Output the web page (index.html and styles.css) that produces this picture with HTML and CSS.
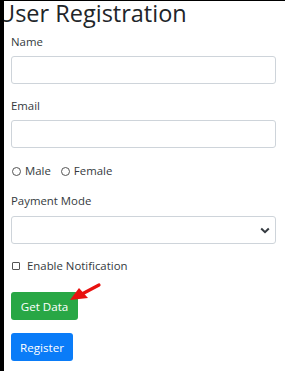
FILE: index.html
```html
<!DOCTYPE html>
<html lang="en">
  <head>
    <meta charset="UTF-8" />
    <meta name="viewport" content="width=device-width, initial-scale=1.0" />
    <title>User Registration</title>
    <link rel="stylesheet" href="styles.css">
  </head>
  <body>
    <div class="page">
      <h1 class="title">User Registration</h1>

      <form class="reg-form">
        <div class="form-group">
          <label class="field-label">Name</label>
          <input type="text" class="field" />
        </div>

        <div class="form-group form-group-wide">
          <label class="field-label">Email</label>
          <input type="text" class="field" />
        </div>

        <div class="radio-row">
          <span class="radio-item"><span class="radio"></span>Male</span>
          <span class="radio-item"><span class="radio"></span>Female</span>
        </div>

        <div class="form-group">
          <label class="field-label field-label-select">Payment Mode</label>
          <div class="select">
            <svg class="chevron" width="10" height="7" viewBox="0 0 10 7">
              <path d="M1.2 1.5 L5 5.2 L8.8 1.5" fill="none" stroke="#343a40" stroke-width="2" />
            </svg>
          </div>
        </div>

        <div class="check-row">
          <span class="checkbox"></span>Enable Notification
        </div>

        <div class="btn-wrap">
          <button type="button" class="btn btn-green">Get Data</button>
          <!-- pointer arrow -->
          <svg class="arrow" width="34" height="22" viewBox="0 0 34 22">
            <path d="M31 3 L14 12" stroke="#e8110f" stroke-width="3.2" stroke-linecap="round" />
            <polygon points="2,18 11,6 20,16" fill="#e8110f" />
          </svg>
        </div>

        <button type="button" class="btn btn-blue">Register</button>
      </form>
    </div>
  </body>
</html>
```

FILE: styles.css
```css
* {
  margin: 0;
  padding: 0;
  box-sizing: border-box;
}

body {
  font-family: "Open Sans", Arial, sans-serif;
  background-color: #000;
  height: 100vh;
  overflow: hidden;
  padding-top: 1px;
}

.page {
  margin-left: 4px;
  height: 100%;
  background-color: #fff;
  color: #212529;
  overflow: hidden;
}

.title {
  font-size: 23.5px;
  font-weight: 400;
  line-height: 28px;
  margin-left: -6px;
  margin-top: -2px;
  white-space: nowrap;
}

.reg-form {
  padding: 0 9px 0 7px;
  margin-top: 6px;
  font-size: 11.4px;
}

.form-group {
  margin-bottom: 13px;
}

.form-group-wide {
  margin-bottom: 14px;
}

.field-label {
  display: block;
  line-height: 18px;
  margin-bottom: 5px;
  color: #343a40;
}

.field-label-select {
  margin-bottom: 6px;
}

.field {
  display: block;
  width: 100%;
  height: 28px;
  border: 1px solid #ced4da;
  border-radius: 3px;
  background-color: #fff;
}

.select {
  display: flex;
  align-items: center;
  justify-content: flex-end;
  height: 28px;
  padding-right: 5px;
  border: 1px solid #ced4da;
  border-radius: 3px;
}

.radio-row {
  display: flex;
  align-items: center;
  gap: 9px;
  line-height: 18px;
  margin-bottom: 12px;
  color: #343a40;
}

.radio-item {
  display: flex;
  align-items: center;
}

.radio {
  width: 9px;
  height: 9px;
  border: 1px solid #555;
  border-radius: 50%;
  margin: 0 4px 0 1px;
}

.check-row {
  display: flex;
  align-items: center;
  line-height: 18px;
  margin-bottom: 17px;
  color: #343a40;
}

.checkbox {
  width: 8px;
  height: 8px;
  border: 1px solid #555;
  border-radius: 1px;
  margin: 0 7px 0 1px;
}

.btn-wrap {
  position: relative;
  margin-bottom: 13px;
}

.btn {
  display: block;
  height: 28px;
  border: none;
  border-radius: 3px;
  color: #fff;
  font-family: "Open Sans", Arial, sans-serif;
  font-size: 11.6px;
  padding: 0;
  white-space: nowrap;
  text-align: center;
}

.btn-green {
  width: 67px;
  background-color: #28a745;
}

.btn-blue {
  width: 62px;
  background-color: #0a7cf8;
}

.arrow {
  position: absolute;
  left: 57px;
  top: -10px;
}
```
